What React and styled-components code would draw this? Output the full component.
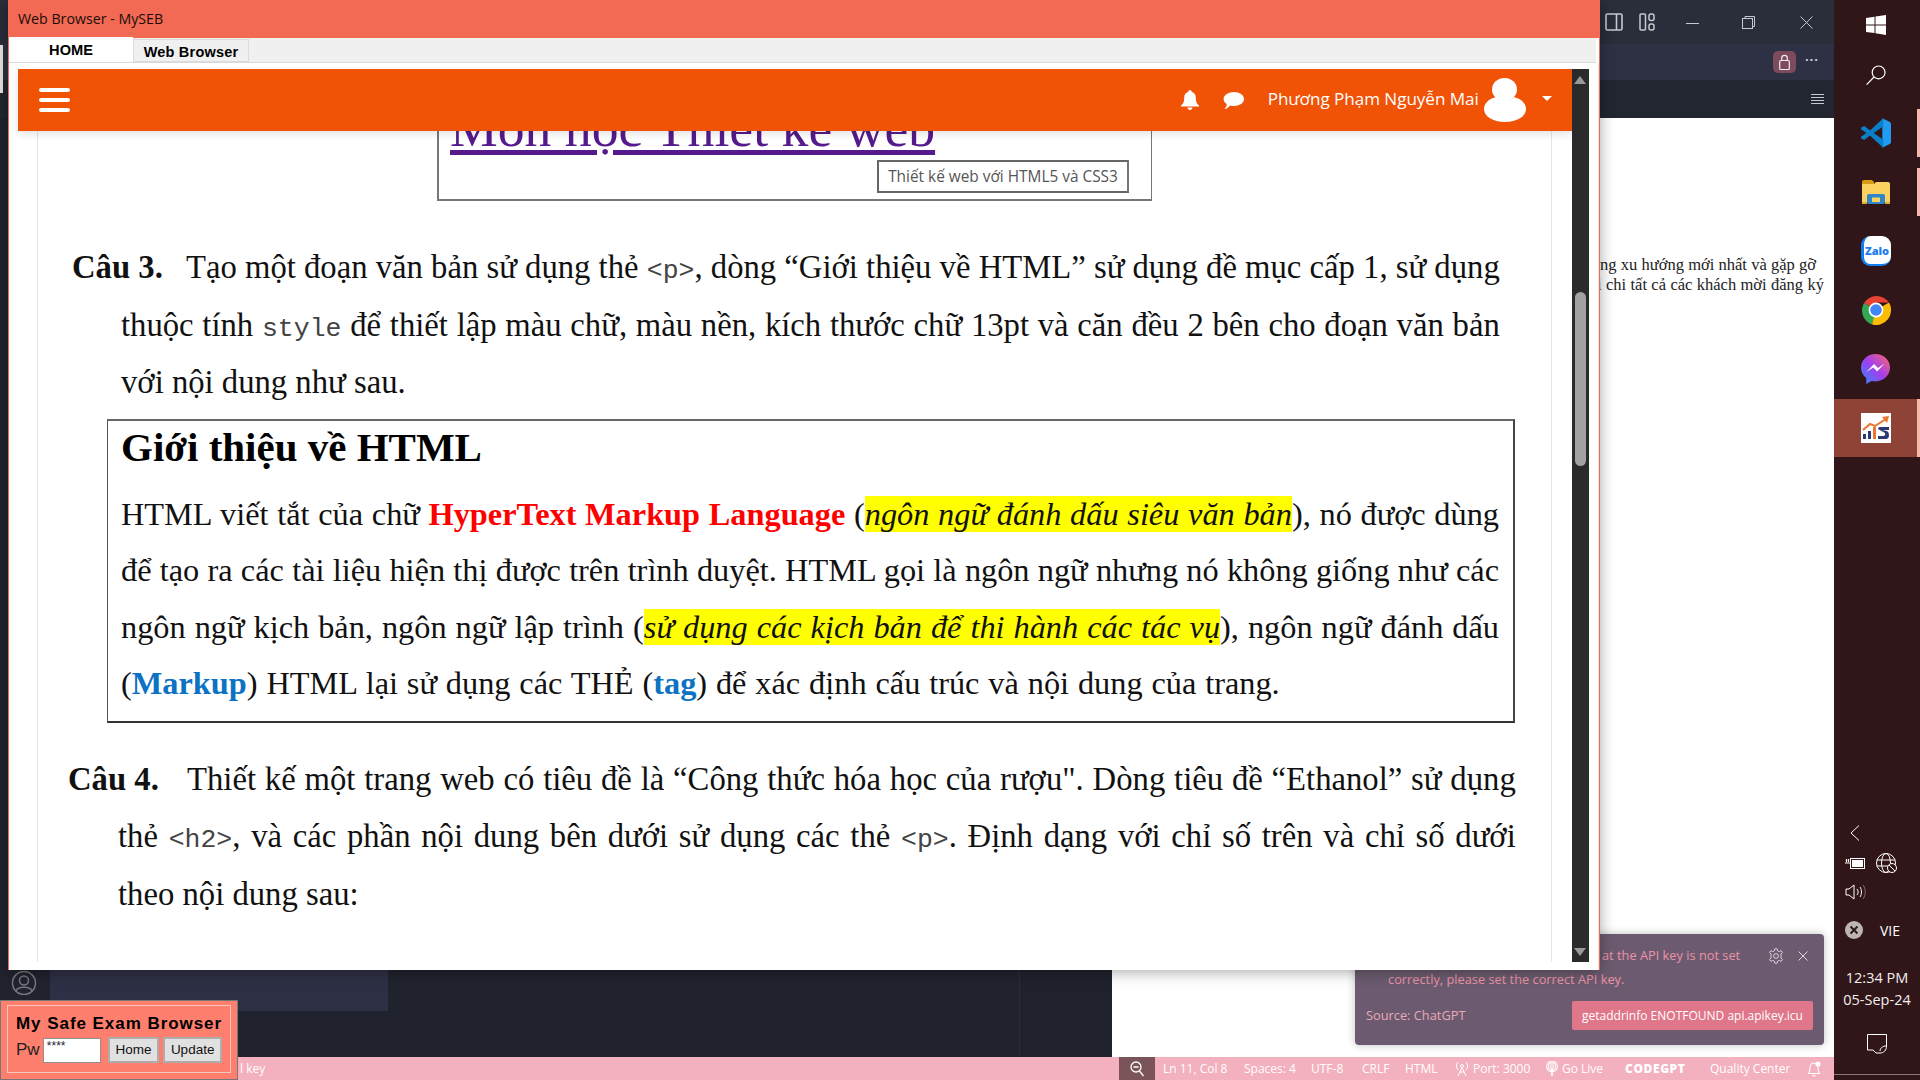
import React from "react";
import styled, { createGlobalStyle } from "styled-components";

const Global = createGlobalStyle`
  html, body { margin: 0; padding: 0; width: 1920px; height: 1080px; overflow: hidden; background: #20232e; }
  * { box-sizing: border-box; }
`;

const Desktop = styled.div`
  position: relative; width: 1920px; height: 1080px; display: flex; overflow: hidden;
  font-family: "Open Sans", "Liberation Sans", sans-serif;
`;

/* ---------- background editor ---------- */
const Code = styled.div`width: 1834px; height: 1080px; display: flex; flex-direction: column; background: #20232e;`;
const CodeTitle = styled.div`height: 44px; background: #2a2d3a; display: flex; align-items: center; justify-content: flex-end; padding-right: 21px; color: #c9cad0;`;
const TitleIcons = styled.div`display: flex; align-items: center;`;
const TitleIcon = styled.span`display: flex; margin-left: ${p => p.$gap}px;`;
const CodeTools = styled.div`height: 36px; background: #2e3144; display: flex; align-items: center; justify-content: flex-end; padding-right: 15px;`;
const LockBadge = styled.span`width: 23px; height: 22px; border-radius: 5px; background: #7e4a5e; display: flex; align-items: center; justify-content: center; margin-right: 9px;`;
const Dots = styled.span`color: #d0d0d8; font-size: 13px; line-height: 1; letter-spacing: 1px; font-weight: 700; margin-top: -6px;`;
const CodeTabs = styled.div`height: 38px; background: #222630; display: flex; align-items: center; justify-content: flex-end; padding-right: 10px;`;
const CodeMain = styled.div`flex: 1; display: flex; min-height: 0;`;
const Activity = styled.div`width: 50px; background: #20232e; display: flex; flex-direction: column; justify-content: flex-end; align-items: center; padding: 0 3px 62px 0;`;
const SidePanel = styled.div`width: 338px; height: 893px; background: #2d3044;`;
const Gutter = styled.div`width: 631px; background: #20232e;`;
const Minimap = styled.div`width: 93px; background: #1f222c; border-left: 1px solid #2a2d38;`;
const Editor = styled.div`flex: 1; background: #fff; padding: 137px 0 0 ${p => p.$left}px; font-family: "Liberation Serif", serif; font-size: 16.5px; color: #222;`;
const EditorLine = styled.div`width: ${p => p.$w}px; margin-left: ${p => p.$x}px; height: 20px; line-height: 20px; text-align-last: justify; white-space: nowrap;`;
const StatusBar = styled.div`height: 23px; background: #f3b0be; display: flex; align-items: center; color: #fff; font-size: 12px;`;
const StatusLead = styled.div`width: 1119px; padding-left: 240px;`;
const ZoomBox = styled.div`width: 36px; height: 23px; background: #7b5459; display: flex; align-items: center; justify-content: center; margin-right: 8px;`;
const StatusItem = styled.div`width: ${p => p.$w}px; display: flex; align-items: center; gap: 4px; white-space: nowrap;`;
const CodeGpt = styled.span`font-weight: 800; letter-spacing: .6px; font-size: 12px;`;
const LeftSliver = styled.span`position: absolute; left: 0; top: 45px; width: 3px; height: 48px; background: #e9e4e4;`;

/* ---------- taskbar ---------- */
const Taskbar = styled.div`width: 86px; height: 1080px; background: #301618; display: flex; flex-direction: column; color: #fff;`;
const TaskSlot = styled.div`
  height: ${p => p.$h}px; flex: none; display: flex; align-items: center; justify-content: center;
  background: ${p => p.$active ? "#8f4336" : "transparent"};
  border-right: 3px solid ${p => p.$mark ? "#f6b8ac" : "transparent"};
  margin-bottom: ${p => p.$mb || 0}px;
`;
const Tray = styled.div`flex: 1; display: flex; flex-direction: column; padding-top: 360px;`;
const TrayRow = styled.div`height: ${p => p.$h}px; display: flex; align-items: center; padding-left: ${p => p.$pl}px; gap: ${p => p.$gap || 0}px;`;
const Vie = styled.span`font-size: 14px; color: #fff;`;
const Clock = styled.div`text-align: center; font-size: 14.5px; line-height: 22px; color: #f4eeee; margin-top: 14px;`;
const Action = styled.div`display: flex; justify-content: center; margin-top: 23px;`;
const TaskRule = styled.div`height: 1px; background: #8b7778; margin-top: 20px;`;
const ZaloMark = styled.div`
  width: 30px; height: 30px; background: #fff; border-radius: 9px; border-left: 3px solid #0f7ff0; border-bottom: 2px solid #0f7ff0;
  color: #1f7df0; font: 800 11px "Open Sans", sans-serif; display: flex; align-items: center; justify-content: center;
`;

/* ---------- exam browser window ---------- */
const Exam = styled.div`
  position: absolute; left: 8px; top: 0; width: 1592px; height: 970px; background: #fff; display: flex; flex-direction: column;
  box-shadow: 0 2px 14px rgba(0,0,0,.35); border-left: 1px solid #f26a53; border-right: 1px solid #f26a53;
`;
const ExamTitle = styled.div`height: 38px; background: #f26a53; color: #1a0d08; display: flex; align-items: center; padding: 0 0 2px 10px; font: 14.2px "Open Sans", sans-serif; margin: 0 -1px;`;
const TabStrip = styled.div`height: 25px; background: #f0f0f0; display: flex; align-items: flex-end; border-bottom: 1px solid #dadada; margin-right: 3px;`;
const HomeTab = styled.div`width: 124px; height: 25px; background: #fff; text-align: center; font: bold 14.6px/26px "Liberation Sans", sans-serif; color: #000;`;
const BrowserTab = styled.div`width: 116px; height: 23px; background: #f0f0f0; border: 1px solid #dcdcdc; text-align: center; font: bold 14.5px/24px "Liberation Sans", sans-serif; color: #000; letter-spacing: .2px;`;
const ExamBody = styled.div`flex: 1; min-height: 0; display: flex; padding: 6px 9px 8px 9px; border-right: 1px solid #e8e8e8;`;
const PageCol = styled.div`width: 1554px; display: flex; flex-direction: column; min-height: 0;`;
const Scroll = styled.div`width: 18px; background: #2b2b2b; display: flex; flex-direction: column; align-items: center; justify-content: space-between; padding: 7px 0 6px;`;
const ScrollTop = styled.div`display: flex; flex-direction: column; align-items: center;`;
const Arrow = styled.span`width: 0; height: 0; border-left: 6px solid transparent; border-right: 6px solid transparent; ${p => p.$down ? "border-top: 8px solid #9a9a9a;" : "border-bottom: 8px solid #9a9a9a;"}`;
const Thumb = styled.span`width: 11px; height: 174px; margin-top: 208px; background: #a3a3a3; border-radius: 6px;`;
const NavBar = styled.header`
  height: 62px; flex: none; background: #f05206; display: flex; align-items: center; padding: 0 20px 0 21px; position: relative; z-index: 2;
  box-shadow: 0 3px 8px rgba(0,0,0,.12);
`;
const Burger = styled.div`display: flex; flex-direction: column; gap: 6px; width: 31px; margin-top: -1px;`;
const BurgerBar = styled.span`height: 4px; background: #fff; border-radius: 2px;`;
const NavRight = styled.div`margin-left: auto; display: flex; align-items: center; color: #fff;`;
const NavGap = styled.span`width: 24px;`;
const UserName = styled.span`font: 17.1px "Open Sans", sans-serif; margin: -3px 5px 0 24px; white-space: nowrap; letter-spacing: -.05px;`;
const Caret = styled.span`width: 0; height: 0; border-left: 5px solid transparent; border-right: 5px solid transparent; border-top: 5px solid #fff; margin: 0 0 4px 16px;`;
const Card = styled.main`
  flex: 1; min-height: 0; margin: 0 20px 0 19px; overflow: hidden; border-left: 1px solid #e6e6e6; border-right: 1px solid #e6e6e6;
  font-family: "Liberation Serif", serif; font-size: 32.7px; color: #111;
`;
const Figure = styled.figure`
  position: relative; margin: 0 0 0 399px; width: 715px; height: 70px; border: 2px solid #777; border-top: 0; border-right-width: 1px; overflow: hidden; background: #fff;
`;
const BigLink = styled.a`display: block; font-size: 53.7px; line-height: 60px; margin: -33px 0 0 11px; color: #551a8b; text-decoration: underline; text-decoration-thickness: 5px; text-underline-offset: 4px; white-space: nowrap;`;
const Caption = styled.span`
  position: absolute; left: 438px; top: 29px; width: 252px; height: 33px; border: 2px solid #666; border-right-color: #777; background: #fff;
  font: 15.4px/30px "Open Sans", sans-serif; color: #555; text-align: center; white-space: nowrap;
`;
const Question = styled.section`padding: 0 ${p => p.$right}px 0 ${p => p.$left}px; margin-top: ${p => p.$top}px;`;
const QLine = styled.div`
  height: 57.5px; line-height: 57.5px; white-space: nowrap; text-align: ${p => p.$last ? "left" : "justify"}; text-align-last: ${p => p.$last ? "left" : "justify"};
  margin-left: ${p => p.$hang || 0}px;
`;
const QLabel = styled.b`display: inline-block; width: ${p => p.$w}px; text-align-last: left;`;
const Mono = styled.code`font-family: "Liberation Mono", monospace; font-size: 26.5px; color: #444;`;
const Box = styled.div`margin: 7px 0 0 69px; width: 1408px; height: 304px; border: 1px solid #555; border-top: 2px solid #666; border-bottom: 2px solid #333; border-right: 2px solid #444; padding: 0 14px 0 13px;`;
const BoxTitle = styled.h1`margin: 0; font-size: 41px; line-height: 44px; padding-top: 4px; height: 65px; font-weight: 700; color: #000;`;
const BoxLine = styled.div`height: 56.5px; line-height: 56.5px; font-size: 32.35px; white-space: nowrap; text-align-last: ${p => p.$last ? "left" : "justify"}; word-spacing: ${p => p.$last ? ".8px" : "0"};`;
const Hot = styled.b`color: #ff0000;`;
const Mark = styled.i`background: #ffff00; color: #111;`;
const Blue = styled.b`color: #0b72c4;`;

/* ---------- toast ---------- */
const Toast = styled.div`
  position: absolute; left: 1355px; top: 934px; width: 469px; height: 111px; background: #6c5b70; border-radius: 4px; padding: 10px 11px 0 11px;
  box-shadow: 0 0 8px rgba(0,0,0,.25); font: 12.8px/23px "Open Sans", sans-serif; color: #eb93a5;
`;
const ToastTop = styled.div`display: flex; justify-content: space-between; height: 24px;`;
const ToastFirst = styled.span`margin-left: 236px; white-space: nowrap;`;
const ToastActions = styled.span`display: flex; align-items: center; gap: 14px; padding-right: 5px; color: #d5c9d5;`;
const ToastSecond = styled.div`margin-left: 22px; white-space: nowrap;`;
const ToastFoot = styled.div`display: flex; justify-content: space-between; align-items: center; margin-top: 10px; color: #e7a9b5;`;
const ToastBtn = styled.span`width: 241px; height: 29px; background: #e0768a; color: #fff; border-radius: 2px; text-align: center; line-height: 29px; white-space: nowrap; font-size: 12px;`;

/* ---------- safe exam widget ---------- */
const Seb = styled.div`
  position: absolute; left: 0; top: 1000px; width: 238px; height: 80px; background: #ff7f6e; border: 1px solid #777; padding: 4px 6px; 
`;
const SebInner = styled.div`height: 68px; border: 1px solid #f6c6bd; padding: 8px 8px 0 8px;`;
const SebTitle = styled.div`font: bold 17px/20px "Liberation Sans", sans-serif; letter-spacing: .95px; color: #000; white-space: nowrap;`;
const SebRow = styled.div`display: flex; align-items: center; margin-top: 3px;`;
const Pw = styled.span`font: 17px "Liberation Sans", sans-serif; color: #222; width: 27px;`;
const PwInput = styled.div`width: 58px; height: 25px; background: #fff; border: 1px solid #8f8f8f; font: 12px/14px "Liberation Sans", sans-serif; color: #223; padding-left: 3px;`;
const SebBtn = styled.div`width: ${p => p.$w}px; height: 26px; margin-left: ${p => p.$gap}px; background: #e1e1e1; border: 2px solid #adadad; font: 13.5px/22px "Liberation Sans", sans-serif; color: #111; text-align: center;`;

/* ---------- icons ---------- */
const Svg = ({ w, h, vb, children, ...rest }) => <svg width={w} height={h} viewBox={vb || `0 0 ${w} ${h}`} fill="none" {...rest}>{children}</svg>;

const WinLogo = () => <Svg w={20} h={20}><path d="M0 3 L8.5 1.8 V9.4 H0 Z M9.5 1.6 L20 0 V9.4 H9.5 Z M0 10.4 H8.5 V18 L0 16.9 Z M9.5 10.4 H20 V20 L9.5 18.3 Z" fill="#fff"/></Svg>;
const SearchIcon = () => <Svg w={20} h={20} stroke="#fff" strokeWidth="1.2"><circle cx="12.6" cy="7.4" r="6.4"/><path d="M8 12 L0.6 19.6"/></Svg>;
const VsCode = () => <Svg w={30} h={30} vb="0 0 100 100"><path d="M71 99 L96 87 Q100 85 100 80 V20 Q100 15 96 13 L71 1 Z" fill="#1f9cf0"/><path d="M74 1 L30 42 L11 27 L1 32 Q-1 35 1 38 L18 50 L1 62 Q-1 65 1 68 L11 73 L30 58 L74 99 V72 L42 50 L74 28 Z" fill="#0a7fc9"/></Svg>;
const Folder = () => <Svg w={28} h={24} vb="0 0 28 24"><path d="M0 2 Q0 0 2 0 H10 L12 2 V4 H0 Z" fill="#d99c10"/><path d="M0 4 H12 L14 2 H26 Q28 2 28 4 V22 H0 Z" fill="#fbd25f"/><rect x="5" y="14" width="18" height="10" rx="2" fill="#2f86c9"/><rect x="10" y="17.5" width="8" height="4.5" fill="#fbd25f"/><rect x="0" y="22" width="5" height="2" fill="#e4ac2a"/><rect x="23" y="22" width="5" height="2" fill="#e4ac2a"/></Svg>;
const Chrome = () => <Svg w={30} h={30} vb="0 0 30 30">
  <path d="M15 15 L3 8 A15 15 0 0 1 28 7.5 H15 Z" fill="#e94235"/>
  <path d="M15 15 L3 8 A15 15 0 0 0 10.5 29.4 L15 22 Z" fill="#34a853"/>
  <path d="M15 15 L28 7.5 A15 15 0 0 1 11 29.5 Z" fill="#fbbc04"/>
  <circle cx="15" cy="15" r="7.4" fill="#fff"/><circle cx="15" cy="15" r="5.8" fill="#4285f4"/></Svg>;
const Messenger = () => <Svg w={29} h={30} vb="0 0 29 30">
  <defs><linearGradient id="mg" x1="0" y1="1" x2="1" y2="0"><stop offset="0" stopColor="#2d8cf5"/><stop offset=".5" stopColor="#a33df0"/><stop offset="1" stopColor="#ff6a6a"/></linearGradient></defs>
  <path d="M14.5 0 C6.5 0 0 6 0 13.6 C0 18 2 21.6 5.3 24 V30 L10.6 27 C11.8 27.2 13.2 27.4 14.5 27.4 C22.5 27.4 29 21.3 29 13.6 C29 6 22.5 0 14.5 0 Z" fill="url(#mg)"/>
  <path d="M5.5 18 L13 10 L17 14 L23.5 9.5 L16.2 17.6 L12.2 13.6 Z" fill="#fff"/></Svg>;
const MySebLogo = () => <Svg w={30} h={30} vb="0 0 30 30">
  <rect width="30" height="30" fill="#fff"/>
  <rect x="2" y="21" width="3" height="5" fill="#2b3a72"/><rect x="7" y="18" width="3" height="8" fill="#2b3a72"/><rect x="12" y="14" width="3" height="12" fill="#e8762c"/>
  <path d="M2 17 L9 11 L14 13 L25 6" stroke="#e8762c" strokeWidth="2"/><path d="M21 4 L28 3 L26 10 Z" fill="#e8762c"/>
  <path d="M28 14 H19 Q17 14 17 16 L24 20 Q25 22 23 23 H17 V26 H25 Q28 26 28 22 Q28 19 26 18 L21 17 H28 Z" fill="#2b3a72"/></Svg>;
const UserCircle = () => <Svg w={26} h={24} vb="0 0 26 24" stroke="#77787f" strokeWidth="1.5"><circle cx="13" cy="12" r="11.5"/><circle cx="13" cy="9.5" r="4.5"/><path d="M5 20 C7 15 19 15 21 20"/></Svg>;
const Bell = ({ c = "#fff", s = 1 }) => <Svg w={18 * s} h={20 * s} vb="0 0 18 20"><path d="M9 0 C10 0 10.6 .8 10.6 1.8 C13.6 2.6 14.8 5 14.8 8 C14.8 12 16 14 18 15.5 V16.5 H0 V15.5 C2 14 3.2 12 3.2 8 C3.2 5 4.4 2.6 7.4 1.8 C7.4 .8 8 0 9 0 Z M6.5 17.5 H11.5 C11.5 19 10.4 20 9 20 C7.6 20 6.5 19 6.5 17.5 Z" fill={c}/></Svg>;
const Bubble = () => <Svg w={21} h={17} vb="0 0 21 17"><path d="M11 0 C16.5 0 21 3 21 7 C21 11 16.5 14 11 14 C9.6 14 8.5 13.8 7.2 13.4 C5.6 15.4 3.6 16.6 1.4 17 C3 15.4 3.8 13.8 3.8 12 C1.6 10.8 .6 9 .6 7 C.6 3 5.5 0 11 0 Z" fill="#fff"/></Svg>;
const Avatar = () => <Svg w={42} h={44} vb="0 0 42 44"><ellipse cx="20.5" cy="11.5" rx="12.5" ry="11.5" fill="#fff"/><path d="M12 19 C4 21 0 26 0 31 C0 38.5 9 44 21 44 C33 44 42 38.5 42 31 C42 26 38 21 30 19 C25 24 17 24 12 19 Z" fill="#fff"/></Svg>;
const Panel = () => <Svg w={18} h={18} stroke="#c8c9d0" strokeWidth="1.6"><rect x="1" y="1" width="16" height="16" rx="1.5"/><path d="M11.5 1 V17"/></Svg>;
const Layout = () => <Svg w={16} h={18} stroke="#c8c9d0" strokeWidth="1.5"><rect x="1" y="1" width="5.5" height="16" rx="1"/><rect x="10" y="1" width="5" height="6.5" rx="2"/><rect x="10" y="11" width="5" height="6" rx="2"/></Svg>;
const Minimize = () => <Svg w={13} h={13} stroke="#c8c9d0"><path d="M0 7.5 H13"/></Svg>;
const Restore = () => <Svg w={13} h={13} stroke="#c8c9d0"><rect x=".5" y="2.5" width="10" height="10"/><path d="M3 2.5 V.5 H12.5 V10.5 H10.5"/></Svg>;
const Close = ({ c = "#c8c9d0", s = 13 }) => <Svg w={s} h={s} stroke={c}><path d={`M.5 .5 L${s - .5} ${s - .5} M${s - .5} .5 L.5 ${s - .5}`}/></Svg>;
const Lock = () => <Svg w={11} h={16} stroke="#eee" strokeWidth="1.2"><rect x=".7" y="6.5" width="9.6" height="9" rx="1"/><path d="M2.8 6.5 V3.5 C2.8 .6 8.2 .6 8.2 3.5 V6.5"/></Svg>;
const Lines = () => <Svg w={13} h={11} stroke="#c8c9d0" strokeWidth="1"><path d="M0 .5 H13 M0 3.5 H13 M0 6.5 H13 M0 9.5 H13"/></Svg>;
const ZoomOut = () => <Svg w={14} h={16} stroke="#fff" strokeWidth="1.3"><circle cx="6" cy="6" r="5"/><path d="M3.5 6 H8.5 M9.5 10 L13.5 15"/></Svg>;
const Antenna = () => <Svg w={14} h={15} stroke="#fff" strokeWidth="1"><circle cx="7" cy="5" r="1.5"/><path d="M7 6.5 L3 15 M7 6.5 L11 15 M4.5 11 H9.5 M3 1 C1 3.5 1 6.5 3 9 M11 1 C13 3.5 13 6.5 11 9"/></Svg>;
const Broadcast = () => <Svg w={12} h={15} stroke="#fff" strokeWidth="1.1"><circle cx="6" cy="5.5" r="1.6"/><circle cx="6" cy="5.5" r="3.6"/><circle cx="6" cy="5.5" r="5.4"/><path d="M6 7 V15" strokeWidth="1.6"/></Svg>;
const BellOutline = () => <Svg w={13} h={16} stroke="#fff" strokeWidth="1.1"><path d="M6 2 C3 2 2 4.5 2 7 C2 9.5 1.4 11 .5 12.5 H11.5 C10.6 11 10 9.5 10 7 C10 4.5 9 2 6 2 Z M4.6 14 C5 15.4 7 15.4 7.4 14"/><circle cx="10" cy="3" r="2.6" fill="#fff" stroke="none"/></Svg>;
const Gear = () => <Svg w={16} h={16} vb="0 0 16 16" stroke="#d9cfd9" strokeWidth="1"><circle cx="8" cy="8" r="2.4"/><path d="M6.8 .8 H9.2 L9.6 2.8 L11.3 3.6 L13.1 2.6 L14.4 4.6 L13 6 V10 L14.4 11.4 L13.1 13.4 L11.3 12.4 L9.6 13.2 L9.2 15.2 H6.8 L6.4 13.2 L4.7 12.4 L2.9 13.4 L1.6 11.4 L3 10 V6 L1.6 4.6 L2.9 2.6 L4.7 3.6 L6.4 2.8 Z"/></Svg>;
const Chevron = () => <Svg w={10} h={16} stroke="#fff" strokeWidth="1"><path d="M9 .5 L1 8 L9 15.5"/></Svg>;
const Battery = () => <Svg w={20} h={12} stroke="#fff"><rect x="5.5" y="1.5" width="14" height="10" strokeWidth="1"/><rect x="7" y="3" width="11" height="7" fill="#fff" stroke="none"/><path d="M0 6 H5 M1.5 2 V5 M3.5 2 V5" strokeWidth="1.2"/></Svg>;
const Globe = () => <Svg w={21} h={20} stroke="#fff" strokeWidth="1"><circle cx="10" cy="10" r="9.5"/><ellipse cx="10" cy="10" rx="4.5" ry="9.5"/><path d="M.8 7 H19.2 M.8 13 H19.2"/><circle cx="16" cy="15" r="4.5" fill="#301618"/><path d="M13 12 L19 18"/></Svg>;
const Speaker = () => <Svg w={21} h={16} stroke="#fff" strokeWidth="1"><path d="M1 5 H4 L9 1 V15 L4 11 H1 Z"/><path d="M12 5 C13.5 7 13.5 9 12 11"/><path d="M15 3 C17 6 17 10 15 13" /><path d="M18 1 C21 5 21 11 18 15" stroke="#8a6a6a"/></Svg>;
const XCircle = () => <Svg w={18} h={18}><circle cx="9" cy="9" r="9" fill="#bdb5b5"/><path d="M5.5 5.5 L12.5 12.5 M12.5 5.5 L5.5 12.5" stroke="#2b1a1a" strokeWidth="2"/></Svg>;
const Note = () => <Svg w={20} h={20} stroke="#fff" strokeWidth="1"><path d="M.5 .5 H19.5 V12 C19.5 16 17 19 13 19 H9 L6 16 H.5 Z"/><path d="M13 17 C13 14 16 12 19 12"/></Svg>;

const Background = () => (
  <Code>
    <CodeTitle>
      <TitleIcons>
        <TitleIcon $gap={0}><Panel /></TitleIcon>
        <TitleIcon $gap={16}><Layout /></TitleIcon>
        <TitleIcon $gap={31}><Minimize /></TitleIcon>
        <TitleIcon $gap={43}><Restore /></TitleIcon>
        <TitleIcon $gap={45}><Close /></TitleIcon>
      </TitleIcons>
    </CodeTitle>
    <CodeTools><LockBadge><Lock /></LockBadge><Dots>···</Dots></CodeTools>
    <CodeTabs><Lines /></CodeTabs>
    <CodeMain>
      <Activity><UserCircle /></Activity>
      <SidePanel />
      <Gutter />
      <Minimap />
      <Editor $left={485}>
        <EditorLine $x={3} $w={216}>ng xu hướng mới nhất và gặp gỡ</EditorLine>
        <EditorLine $x={0} $w={227}>i chi tất cả các khách mời đăng ký</EditorLine>
      </Editor>
    </CodeMain>
    <StatusBar>
      <StatusLead>l key</StatusLead>
      <ZoomBox><ZoomOut /></ZoomBox>
      <StatusItem $w={81}>Ln 11, Col 8</StatusItem>
      <StatusItem $w={67}>Spaces: 4</StatusItem>
      <StatusItem $w={51}>UTF-8</StatusItem>
      <StatusItem $w={43}>CRLF</StatusItem>
      <StatusItem $w={50}>HTML</StatusItem>
      <StatusItem $w={91}><Antenna />Port: 3000</StatusItem>
      <StatusItem $w={79}><Broadcast />Go Live</StatusItem>
      <StatusItem $w={85}><CodeGpt>CODEGPT</CodeGpt></StatusItem>
      <StatusItem $w={98}>Quality Center</StatusItem>
      <StatusItem $w={13}><BellOutline /></StatusItem>
    </StatusBar>
  </Code>
);

const TaskColumn = () => (
  <Taskbar>
    <TaskSlot $h={50}><WinLogo /></TaskSlot>
    <TaskSlot $h={50} $mb={9}><SearchIcon /></TaskSlot>
    <TaskSlot $h={48} $mark $mb={11}><VsCode /></TaskSlot>
    <TaskSlot $h={48} $mark $mb={11}><Folder /></TaskSlot>
    <TaskSlot $h={48} $mb={11}><ZaloMark>Zalo</ZaloMark></TaskSlot>
    <TaskSlot $h={48} $mb={11}><Chrome /></TaskSlot>
    <TaskSlot $h={48} $mb={6}><Messenger /></TaskSlot>
    <TaskSlot $h={58} $active $mark><MySebLogo /></TaskSlot>
    <Tray>
      <TrayRow $h={32} $pl={16}><Chevron /></TrayRow>
      <TrayRow $h={28} $pl={11} $gap={11}><Battery /><Globe /></TrayRow>
      <TrayRow $h={30} $pl={11}><Speaker /></TrayRow>
      <TrayRow $h={46} $pl={11} $gap={17}><XCircle /><Vie>VIE</Vie></TrayRow>
      <Clock>12:34 PM<br />05-Sep-24</Clock>
      <Action><Note /></Action>
      <TaskRule />
    </Tray>
  </Taskbar>
);

const ExamWindow = () => (
  <Exam>
    <ExamTitle>Web Browser - MySEB</ExamTitle>
    <TabStrip>
      <HomeTab>HOME</HomeTab>
      <BrowserTab>Web Browser</BrowserTab>
    </TabStrip>
    <ExamBody>
      <PageCol>
        <NavBar>
          <Burger><BurgerBar /><BurgerBar /><BurgerBar /></Burger>
          <NavRight>
            <Bell />
            <NavGap />
            <Bubble />
            <UserName>Phương Phạm Nguyễn Mai</UserName>
            <Avatar />
            <Caret />
          </NavRight>
        </NavBar>
        <Card>
          <Figure>
            <BigLink>Môn học Thiết kế web</BigLink>
            <Caption>Thiết kế web với HTML5 và CSS3</Caption>
          </Figure>
          <Question $left={83} $right={51} $top={38}>
            <QLine $hang={-49}><QLabel $w={114}>Câu 3.</QLabel>Tạo một đoạn văn bản sử dụng thẻ <Mono>&lt;p&gt;</Mono>, dòng “Giới thiệu về HTML” sử dụng đề mục cấp 1, sử dụng</QLine>
            <QLine>thuộc tính <Mono>style</Mono> để thiết lập màu chữ, màu nền, kích thước chữ 13pt và căn đều 2 bên cho đoạn văn bản</QLine>
            <QLine $last>với nội dung như sau.</QLine>
          </Question>
          <Box>
            <BoxTitle>Giới thiệu về HTML</BoxTitle>
            <BoxLine>HTML viết tắt của chữ <Hot>HyperText Markup Language</Hot> (<Mark>ngôn ngữ đánh dấu siêu văn bản</Mark>), nó được dùng</BoxLine>
            <BoxLine>để tạo ra các tài liệu hiện thị được trên trình duyệt. HTML gọi là ngôn ngữ nhưng nó không giống như các</BoxLine>
            <BoxLine>ngôn ngữ kịch bản, ngôn ngữ lập trình (<Mark>sử dụng các kịch bản để thi hành các tác vụ</Mark>), ngôn ngữ đánh dấu</BoxLine>
            <BoxLine $last>(<Blue>Markup</Blue>) HTML lại sử dụng các THẺ (<Blue>tag</Blue>) để xác định cấu trúc và nội dung của trang.</BoxLine>
          </Box>
          <Question $left={80} $right={35} $top={28}>
            <QLine $hang={-50}><QLabel $w={119}>Câu 4.</QLabel>Thiết kế một trang web có tiêu đề là “Công thức hóa học của rượu". Dòng tiêu đề “Ethanol” sử dụng</QLine>
            <QLine>thẻ <Mono>&lt;h2&gt;</Mono>, và các phần nội dung bên dưới sử dụng các thẻ <Mono>&lt;p&gt;</Mono>. Định dạng với chỉ số trên và chỉ số dưới</QLine>
            <QLine $last>theo nội dung sau:</QLine>
          </Question>
        </Card>
      </PageCol>
      <Scroll>
        <ScrollTop><Arrow /><Thumb /></ScrollTop>
        <Arrow $down />
      </Scroll>
    </ExamBody>
  </Exam>
);

const NoticeToast = () => (
  <Toast>
    <ToastTop>
      <ToastFirst>at the API key is not set</ToastFirst>
      <ToastActions><Gear /><Close c="#e0d6e0" s={10} /></ToastActions>
    </ToastTop>
    <ToastSecond>correctly, please set the correct API key.</ToastSecond>
    <ToastFoot>
      <span>Source: ChatGPT</span>
      <ToastBtn>getaddrinfo ENOTFOUND api.apikey.icu</ToastBtn>
    </ToastFoot>
  </Toast>
);

const SebWidget = () => (
  <Seb>
    <SebInner>
      <SebTitle>My Safe Exam Browser</SebTitle>
      <SebRow>
        <Pw>Pw</Pw>
        <PwInput>****</PwInput>
        <SebBtn $w={52} $gap={7}>Home</SebBtn>
        <SebBtn $w={59} $gap={4}>Update</SebBtn>
      </SebRow>
    </SebInner>
  </Seb>
);

export default function App() {
  return (
    <Desktop>
      <Global />
      <Background />
      <TaskColumn />
      <LeftSliver />
      <NoticeToast />
      <ExamWindow />
      <SebWidget />
    </Desktop>
  );
}
